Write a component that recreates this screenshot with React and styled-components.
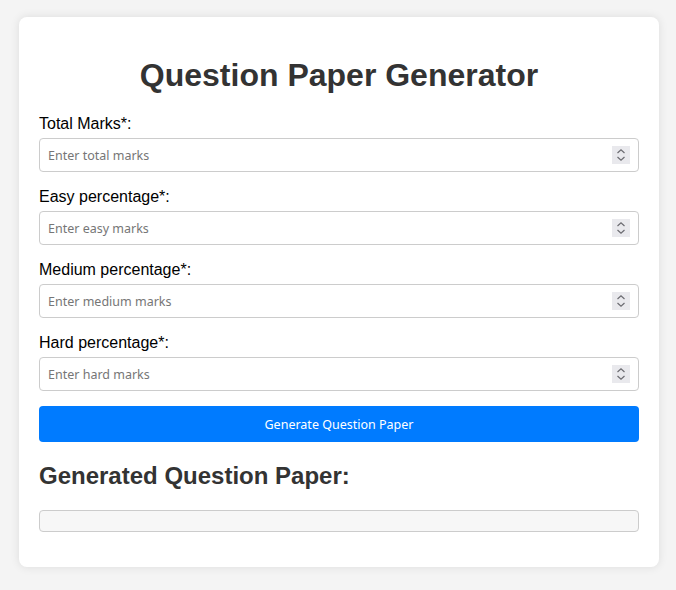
import React, { useState } from "react";
import styled, { createGlobalStyle } from "styled-components";

const GlobalStyle = createGlobalStyle`
  body {
    margin: 0;
    background-color: #f4f4f4;
    font-family: "Liberation Sans", Arial, sans-serif;
  }
`;

const StyledCard = styled.div`
  width: 600px;
  margin: 17px 17px 16px 19px;
  padding: 20px;
  background-color: #fff;
  border-radius: 8px;
  box-shadow: 0 0 10px rgba(0, 0, 0, 0.1);
`;

const StyledTitle = styled.h1`
  margin: 20px 0 21px;
  font-size: 32px;
  line-height: 37px;
  text-align: center;
  color: #333;
`;

const StyledForm = styled.div`
  display: flex;
  flex-direction: column;
  gap: 16px;
`;

const StyledField = styled.div`
  display: flex;
  flex-direction: column;
  gap: 5px;
`;

const StyledLabel = styled.label`
  font-size: 16px;
  line-height: 18px;
  color: #000;
`;

const StyledInputBox = styled.div`
  display: flex;
  align-items: center;
  height: 32px;
  padding: 0 8px;
  border: 1px solid #ccc;
  border-radius: 4px;
  background: #fff;
`;

const StyledInput = styled.input`
  flex: 1;
  min-width: 0;
  border: none;
  outline: none;
  padding: 0;
  font-family: "Noto Sans", sans-serif;
  font-size: 12.5px;
  color: #333;

  &::placeholder {
    color: #767676;
  }
`;

const StyledSpinner = styled.span`
  display: flex;
  align-items: center;
  justify-content: center;
  width: 18px;
  height: 18px;
  background-color: #e9e9ed;
`;

const StyledButton = styled.button`
  width: 100%;
  height: 36px;
  margin-top: 15px;
  border: none;
  border-radius: 4px;
  background-color: #007bff;
  color: #fff;
  font-family: "Noto Sans", sans-serif;
  font-size: 12.5px;
  cursor: pointer;
`;

const StyledSubTitle = styled.h2`
  margin: 20px 0;
  font-size: 24px;
  line-height: 28px;
  color: #333;
`;

const StyledOutput = styled.div`
  height: 20px;
  margin-bottom: 15px;
  border: 1px solid #ccc;
  border-radius: 4px;
  background-color: #f7f7f7;
`;

const Spinner = () => (
  <StyledSpinner>
    <svg width="10" height="14" viewBox="0 0 10 14" fill="none" stroke="#6b6b70" strokeWidth="1.2">
      <path d="M1.5 5 L5 1.8 L8.5 5" />
      <path d="M1.5 9 L5 12.2 L8.5 9" />
    </svg>
  </StyledSpinner>
);

const fields = [
  { label: "Total Marks*:", placeholder: "Enter total marks" },
  { label: "Easy percentage*:", placeholder: "Enter easy marks" },
  { label: "Medium percentage*:", placeholder: "Enter medium marks" },
  { label: "Hard percentage*:", placeholder: "Enter hard marks" },
];

const App = () => {
  const [values, setValues] = useState({});

  return (
    <>
      <GlobalStyle />
      <StyledCard>
        <StyledTitle>Question Paper Generator</StyledTitle>
        <StyledForm>
          {fields.map((f) => (
            <StyledField key={f.label}>
              <StyledLabel>{f.label}</StyledLabel>
              <StyledInputBox>
                <StyledInput
                  placeholder={f.placeholder}
                  value={values[f.label] || ""}
                  onChange={(e) => setValues({ ...values, [f.label]: e.target.value })}
                />
                <Spinner />
              </StyledInputBox>
            </StyledField>
          ))}
        </StyledForm>
        <StyledButton>Generate Question Paper</StyledButton>
        <StyledSubTitle>Generated Question Paper:</StyledSubTitle>
        <StyledOutput />
      </StyledCard>
    </>
  );
};

export default App;
